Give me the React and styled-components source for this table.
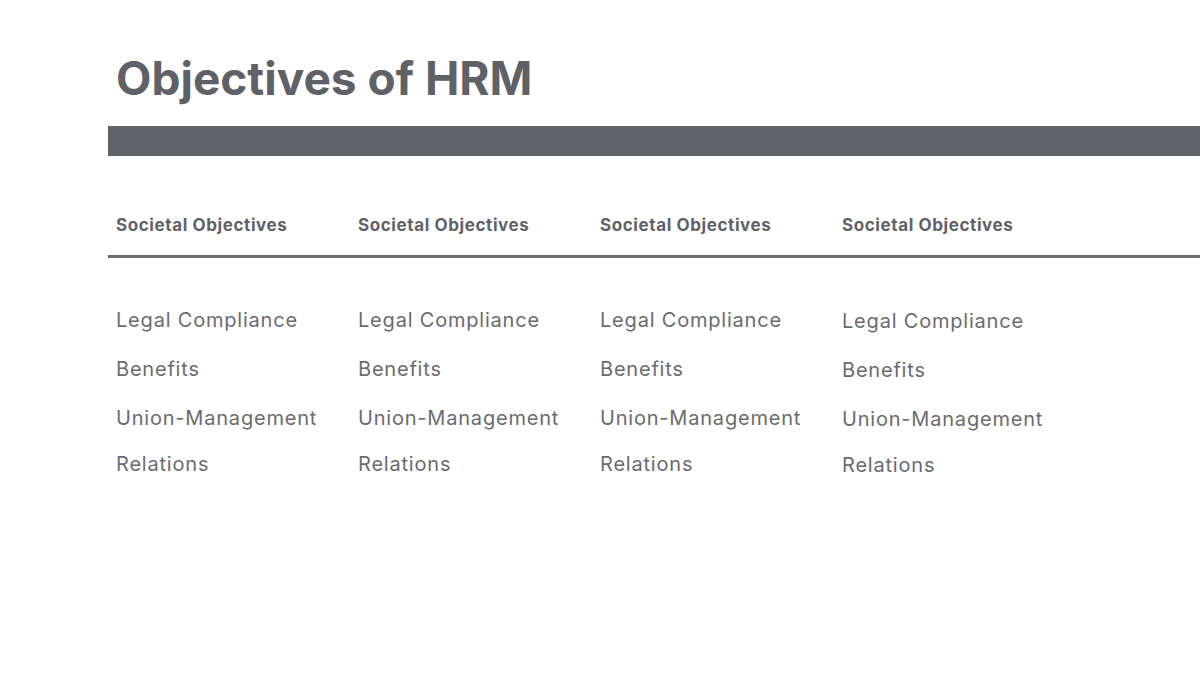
import React from "react";
import styled, { createGlobalStyle } from "styled-components";

const Global = createGlobalStyle`
  html, body { margin: 0; padding: 0; background: #ffffff; }
  body { font-family: "Inter", "Open Sans", sans-serif; }
`;

const Page = styled.div`
  width: 1200px;
  height: 675px;
  overflow: hidden;
  box-sizing: border-box;
  padding: 50px 0 0 108px;
  background: #fff;
`;

const Title = styled.h1`
  margin: 0 0 20px 8px;
  font-family: "Inter", sans-serif;
  font-weight: 700;
  font-size: 46px;
  line-height: 56px;
  color: #5f6168;
`;

const Bar = styled.div`
  height: 30px;
  background: #60636b;
`;

const HeaderRow = styled.div`
  display: grid;
  grid-template-columns: repeat(4, 242px);
  height: 102px;
  box-sizing: border-box;
  padding-top: 57px;
  border-bottom: 3px solid #6d6d75;
`;

const HeaderCell = styled.div`
  padding-left: 8px;
  font-family: "Inter", sans-serif;
  font-weight: 700;
  font-size: 17px;
  letter-spacing: 0.6px;
  line-height: 24px;
  color: #616269;
`;

const Body = styled.div`
  display: grid;
  grid-template-columns: repeat(4, 242px);
  padding-top: 39px;
`;

const Column = styled.ul`
  list-style: none;
  margin: 0;
  padding: ${(p) => (p.$shift ? "1px 0 0 8px" : "0 0 0 8px")};
  display: flex;
  flex-direction: column;
  gap: 3px;
`;

const Item = styled.li`
  font-family: "Inter", sans-serif;
  font-weight: 400;
  font-size: 20px;
  letter-spacing: 0.8px;
  line-height: 46px;
  color: #6a6b70;
  width: 220px;
`;

const cols = [0, 1, 2, 3];
const items = ["Legal Compliance", "Benefits", "Union-Management Relations"];

export default function App() {
  return (
    <>
      <Global />
      <Page>
        <Title>Objectives of HRM</Title>
        <Bar />
        <HeaderRow>
          {cols.map((c) => (
            <HeaderCell key={c}>Societal Objectives</HeaderCell>
          ))}
        </HeaderRow>
        <Body>
          {cols.map((c) => (
            <Column key={c} $shift={c === 3}>
              {items.map((it) => (
                <Item key={it}>{it}</Item>
              ))}
            </Column>
          ))}
        </Body>
      </Page>
    </>
  );
}
